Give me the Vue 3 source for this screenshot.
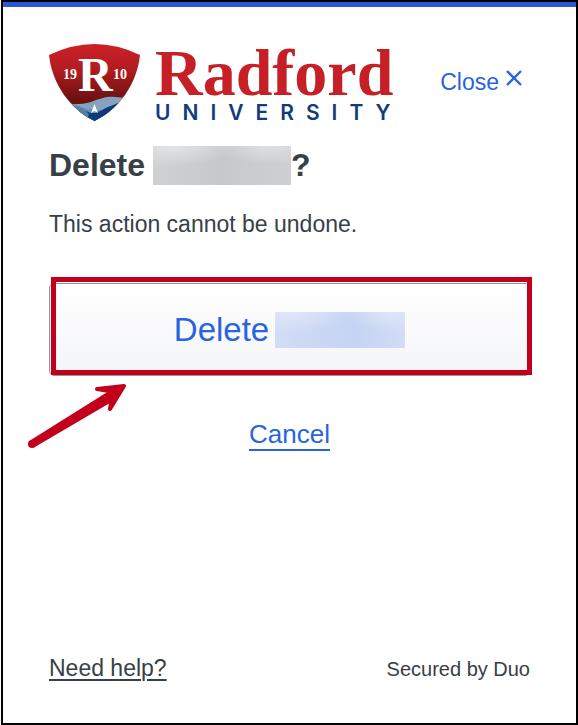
<template>
  <main class="prompt">
    <header class="prompt-header">
      <svg class="logo" viewBox="0 0 348 80" role="img" aria-label="Radford University 1910">
        <defs>
          <linearGradient id="shield-red" x1="0" y1="0" x2="0" y2="1">
            <stop offset="0" stop-color="#cf2127" />
            <stop offset="0.35" stop-color="#b01c20" />
            <stop offset="0.75" stop-color="#68100f" />
          </linearGradient>
          <clipPath id="shield-shape">
            <path d="M0 13 Q45.500 -9 91 13 C88 42 70 67 45.500 79 C21 67 3 42 0 13Z" />
          </clipPath>
        </defs>
        <g clip-path="url(#shield-shape)">
          <rect width="91" height="80" fill="url(#shield-red)" />
          <path d="M0 60 C20 63 31 63 42 60 C52 56 59 54 66 55 L91 57 V80 H0Z" fill="#86a2bf" />
          <path d="M0 59 C22 60 30 64 38 67 L54 69 L50 80 H0Z" fill="#6a8fb3" />
          <path d="M26 70 C33 66 38 70 42 71 C50 72 54 66 62 64 C68 61 74 59 91 54 V80 H26Z" fill="#0d3a78" />
          <path d="M18 64 C28 62 35 67 40 72 L38 77Z" fill="#567fa7" />
        </g>
        <path d="M45.500 62 L49 71 L45.500 69 L42 71Z" fill="#fff" />
        <text class="shield-letter" x="29" y="49">R</text>
        <text class="shield-year" x="14" y="37">19</text>
        <text class="shield-year" x="64" y="37">10</text>
        <text class="logo-name" x="106" y="53">Radford</text>
        <text class="logo-sub" x="106" y="78">UNIVERSITY</text>
      </svg>
      <button class="close-btn" type="button">
        <span>Close</span>
        <svg class="close-icon" viewBox="0 0 18 28" aria-hidden="true">
          <path d="M2 3 L16 17 M16 3 L2 17" />
        </svg>
      </button>
    </header>

    <h1 class="title">
      <span>Delete</span>
      <span class="redacted-title"></span>
      <span>?</span>
    </h1>
    <p class="message">This action cannot be undone.</p>

    <div class="action">
      <button class="delete-btn" type="button">
        <span>Delete</span>
        <span class="redacted-button"></span>
      </button>
      <div class="highlight"></div>
      <svg class="arrow" viewBox="0 0 100 66" aria-hidden="true">
        <circle cx="5" cy="61" r="4" />
        <path d="M3 57.600 L82 8 L88 17 L7 64.400Z" />
        <path class="arrow-head" d="M70 6 L97 3 L83 26 L85 14 L82 8Z" />
      </svg>
    </div>

    <a class="cancel" href="#">Cancel</a>

    <footer class="prompt-footer">
      <a class="help" href="#">Need help?</a>
      <span class="secured">Secured by Duo</span>
    </footer>
  </main>
</template>

<script setup>
</script>

<style>
body { background: #fff; }
</style>

<style scoped>
.prompt { display: flex; flex-direction: column; box-sizing: border-box; min-height: 100vh; margin-left: 1px; padding: 0 46px 40px; border: 2px solid #000; background: linear-gradient(#2b57db, #2b57db) top / 100% 5px no-repeat #fff; color: #374047; font-family: "Liberation Sans", Arial, sans-serif; font-size: 23px; }
.prompt-header { display: flex; align-items: center; justify-content: space-between; padding: 40px 7px 0 0; }
.logo { width: 348px; height: 80px; flex-shrink: 0; overflow: visible; }
.shield-letter { font: bold 48px "Liberation Serif", serif; fill: #fff; }
.shield-year { font: bold 14px "Liberation Serif", serif; fill: #fff; }
.logo-name { font: bold 66px "Liberation Serif", serif; fill: #c62026; }
.logo-sub { font: 600 21px Inter, sans-serif; fill: #113d7b; letter-spacing: 12px; }

.close-btn { display: flex; gap: 6px; padding: 0; border: 0; background: none; color: #2864df; font-family: inherit; font-size: 23px; line-height: 28px; cursor: pointer; }
.close-icon { width: 18px; height: 28px; fill: none; stroke: #2864df; stroke-width: 2.4; }

.title { display: flex; margin: 24px 0 0; font-size: 32px; font-weight: bold; line-height: 39px; }
.redacted-title { width: 138px; height: 39px; margin-left: 8px; background: radial-gradient(ellipse 60px 20px at 20px 0, #e3e4e5, transparent), radial-gradient(ellipse 50px 18px at 115px 0, #dfe0e1, transparent), linear-gradient(90deg, #d0d1d2, #c6c8c9 50%, #cfd0d2); }
.message { margin: 24px 0 0; line-height: 30px; }

.action { position: relative; margin-top: 44px; }
.delete-btn { display: flex; align-items: center; justify-content: center; gap: 6px; width: 100%; height: 93px; padding: 0; border: 1px solid #8c959f; border-radius: 5px; background: linear-gradient(#fff, #f4f5f8); color: #2864df; font-family: inherit; font-size: 33px; cursor: pointer; }
.redacted-button { width: 130px; height: 36px; background: radial-gradient(ellipse 60px 20px at 15px 0, #dfe7f8, transparent), radial-gradient(ellipse 50px 20px at 120px 0, #dee6f8, transparent), linear-gradient(90deg, #d2ddf5, #c5d4f4 60%, #d1dcf6); }
.highlight { position: absolute; inset: -6px -2px 1px 2px; border: 5px solid #c2001b; pointer-events: none; }
.arrow { position: absolute; left: -22px; top: 100px; width: 100px; height: 66px; fill: #c2001b; pointer-events: none; }
.arrow-head { stroke: #c2001b; stroke-width: 4; stroke-linejoin: round; }

.cancel { align-self: center; margin-top: 43px; border-bottom: 2px solid #2864df; color: #2864df; font-size: 26px; line-height: 30px; text-decoration: none; }

.prompt-footer { display: flex; align-items: baseline; justify-content: space-between; margin-top: auto; line-height: 28px; }
.help { color: inherit; text-decoration: underline; text-decoration-thickness: 2px; text-underline-offset: 3px; }
.secured { font-size: 20px; }
</style>
